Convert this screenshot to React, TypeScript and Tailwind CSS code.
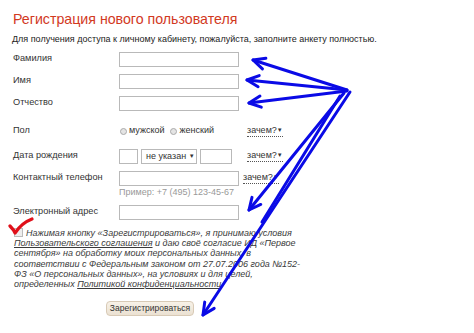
import React from "react";

function wings(tx: number, ty: number, fx: number, fy: number, len = 13, ang = 0.45) {
  const a = Math.atan2(fy - ty, fx - tx);
  const p1 = [tx + len * Math.cos(a + ang), ty + len * Math.sin(a + ang)];
  const p2 = [tx + len * Math.cos(a - ang), ty + len * Math.sin(a - ang)];
  return `M${p1[0]},${p1[1]} L${tx},${ty} L${p2[0]},${p2[1]}`;
}

function Arrows() {
  const arrows: [number, number, number, number][] = [
    [347, 90, 253, 60],
    [347, 90, 247, 80],
    [347, 91, 249, 103],
    [344, 93, 249, 210],
    [350, 92, 203, 315],
  ];
  return (
    <svg className="absolute left-0 top-0 pointer-events-none" width={474} height={333} viewBox="0 0 474 333">
      {arrows.map(([fx, fy, tx, ty], i) => (
        <g key={i} stroke="#0a0ae6" strokeWidth={3} fill="none" strokeLinecap="round" strokeLinejoin="round">
          <path d={`M${fx},${fy} L${tx},${ty}`} />
          <path d={wings(tx, ty, fx, fy)} />
        </g>
      ))}
      <path d="M340,96 L262,222" stroke="#0a0ae6" strokeWidth={3} fill="none" strokeLinecap="round" />
    </svg>
  );
}

function Input({ w = "w-[120px]" }: { w?: string }) {
  return <div className={`${w} h-[15px] border border-[#b9b9b9] bg-white`} />;
}

function Why() {
  return (
    <span className="ml-[4px] whitespace-nowrap text-[9px] text-[#333] border-b border-dotted border-[#555] leading-[11px]">
      зачем?<span className="text-[6px] align-[1px]">▼</span>
    </span>
  );
}

function Row({ label, children, h = "h-[16px]", mt }: { label: string; children: React.ReactNode; h?: string; mt: string }) {
  return (
    <div className={`flex items-center ${h} ${mt}`}>
      <div className="w-[106px] whitespace-nowrap text-[9.2px] text-[#333]">{label}</div>
      <div className="flex items-center">{children}</div>
    </div>
  );
}

function Radio() {
  return <span className="inline-block w-[7px] h-[7px] rounded-full border border-[#aaa] bg-[#e4e4e4] mr-[2px]" />;
}

export default function App() {
  return (
    <div className="relative w-[474px] h-[333px] bg-white overflow-hidden" style={{ fontFamily: '"Liberation Sans", Arial, sans-serif' }}>
      <div className="pl-[13px] pt-[9px]">
        <div className="text-[14.2px] leading-[20px] text-[#d2391e] whitespace-nowrap">Регистрация нового пользователя</div>
        <div className="mt-[3px] -ml-[1px] text-[9px] leading-[14px] text-[#222] whitespace-nowrap">
          Для получения доступа к личному кабинету, пожалуйста, заполните анкету полностью.
        </div>
        <Row label="Фамилия" mt="mt-[5px]"><Input /></Row>
        <Row label="Имя" mt="mt-[6px]"><Input /></Row>
        <Row label="Отчество" mt="mt-[6px]"><Input /></Row>
        <Row label="Пол" mt="mt-[12px]">
          <div className="w-[124px] flex items-center text-[9px] text-[#333] whitespace-nowrap">
            <span className="ml-[1px]" />
            <Radio />
            <span className="mr-[6px]">мужской</span>
            <Radio />
            <span>женский</span>
          </div>
          <Why />
        </Row>
        <Row label="Дата рождения" mt="mt-[9px]">
          <div className="w-[124px] flex items-center">
            <Input w="w-[19px]" />
            <div className="ml-[3px] w-[56px] h-[15px] border border-[#b9b9b9] text-[9px] text-[#333] leading-[13px] pl-[4px] whitespace-nowrap">
              не указан <span className="text-[6px] align-[1px]">▼</span>
            </div>
            <div className="ml-[3px]"><Input w="w-[32px]" /></div>
          </div>
          <Why />
        </Row>
        <Row label="Контактный телефон" mt="mt-[6px]">
          <Input />
          <Why />
        </Row>
        <div className="ml-[106px] mt-[1px] h-[11px] text-[9px] leading-[11px] text-[#999] whitespace-nowrap">Пример: +7 (495) 123-45-67</div>
        <Row label="Электронный адрес" mt="mt-[6px]"><Input /></Row>
        <div className="relative mt-[8px] ml-[1px] text-[9px] leading-[10.2px] italic text-[#3a3a3a] whitespace-nowrap">
          <span className="inline-block w-[9px] h-[9px] border border-[#bbb] bg-[#eee] align-[-1px] mr-[3px]" />
          Нажимая кнопку «Зарегистрироваться», я принимаю условия
          <br />
          <span className="underline">Пользовательского соглашения</span> и даю своё согласие ИД «Первое
          <br />
          сентября» на обработку моих персональных данных, в
          <br />
          соответствии с Федеральным законом от 27.07.2006 года №152-
          <br />
          ФЗ «О персональных данных», на условиях и для целей,
          <br />
          определенных <span className="underline">Политикой конфиденциальности</span>.
          <svg className="absolute -left-[6px] -top-[11px]" width={26} height={19} viewBox="0 0 26 19">
            <path d="M2,9 C4,11 6,13 7,16 C11,10 16,5 24,2" stroke="#e0101a" strokeWidth={3.2} fill="none" strokeLinecap="round" strokeLinejoin="round" />
          </svg>
        </div>
        <div className="mt-[12px] ml-[93px] w-[88px] h-[15px] rounded-[4px] border border-[#d8cab6] bg-gradient-to-b from-[#f8f2e8] to-[#ebe1d2] flex items-center justify-center text-[8.5px] text-[#333] whitespace-nowrap">
          Зарегистрироваться
        </div>
      </div>
      <Arrows />
    </div>
  );
}
